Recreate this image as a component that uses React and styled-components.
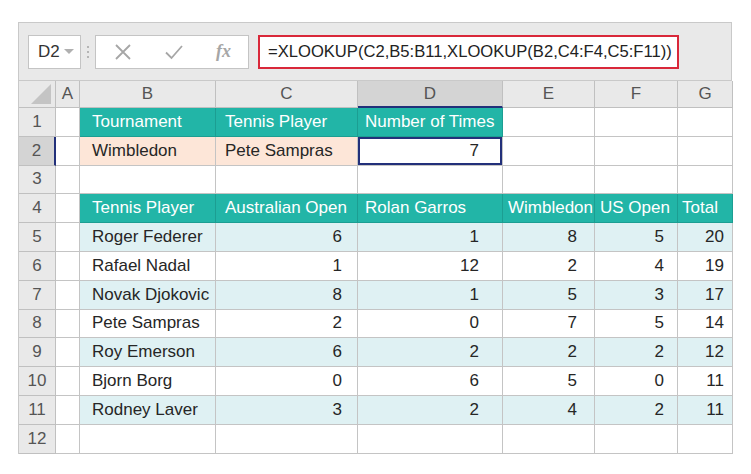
import React from "react";
import styled, { createGlobalStyle } from "styled-components";

const GlobalStyle = createGlobalStyle`
  body {
    margin: 0;
    background: #ffffff;
    font-family: "Liberation Sans", Arial, sans-serif;
  }
`;

const COLS = ["A", "B", "C", "D", "E", "F", "G"];
const WIDTHS = "37px 24px 136px 142px 145px 92px 83px 55px";
// per-column text insets, read off the screenshot
const PAD_LEFT = [0, 12, 9, 7, 5, 5, 4];
const PAD_RIGHT = [0, 10, 15, 23, 17, 13, 8];

const TEAL = "#22b5a7";
const CYAN = "#dff1f3";
const PEACH = "#fde6d8";

const players = [
  ["Roger Federer", 6, 1, 8, 5, 20],
  ["Rafael Nadal", 1, 12, 2, 4, 19],
  ["Novak Djokovic", 8, 1, 5, 3, 17],
  ["Pete Sampras", 2, 0, 7, 5, 14],
  ["Roy Emerson", 6, 2, 2, 2, 12],
  ["Bjorn Borg", 0, 6, 5, 0, 11],
  ["Rodney Laver", 3, 2, 4, 2, 11],
];

function buildRows() {
  const empty = ["", "", "", "", "", "", ""];
  const rows = [];
  rows.push({
    cells: ["", "Tournament", "Tennis Player", "Number of Times", "", "", ""],
    bg: [null, TEAL, TEAL, TEAL, null, null, null],
    head: true,
  });
  rows.push({
    cells: ["", "Wimbledon", "Pete Sampras", "7", "", "", ""],
    bg: [null, PEACH, PEACH, null, null, null, null],
    right: [false, false, false, true],
  });
  rows.push({ cells: empty, bg: [] });
  rows.push({
    cells: ["", "Tennis Player", "Australian Open", "Rolan Garros", "Wimbledon", "US Open", "Total"],
    bg: [null, TEAL, TEAL, TEAL, TEAL, TEAL, TEAL],
    head: true,
  });
  players.forEach((p, i) => {
    const shade = i % 2 === 0 ? CYAN : null;
    rows.push({
      cells: ["", ...p.map(String)],
      bg: [null, shade, shade, shade, shade, shade, shade],
      right: [false, false, true, true, true, true, true],
    });
  });
  rows.push({ cells: empty, bg: [] });
  return rows;
}

function Toolbar() {
  return (
    <Bar>
      <NameBox>
        <span>D2</span>
        <Caret />
      </NameBox>
      <Dots>
        <i />
        <i />
        <i />
      </Dots>
      <ActionBox>
        <svg width="18" height="18" viewBox="0 0 18 18">
          <path d="M2 2 L16 16 M16 2 L2 16" stroke="#a6a6a6" strokeWidth="1.8" fill="none" />
        </svg>
        <svg width="20" height="18" viewBox="0 0 20 18">
          <path d="M2 9.5 L7.5 15 L18 3" stroke="#a6a6a6" strokeWidth="1.8" fill="none" />
        </svg>
        <Fx>fx</Fx>
      </ActionBox>
      <FormulaBox>=XLOOKUP(C2,B5:B11,XLOOKUP(B2,C4:F4,C5:F11))</FormulaBox>
    </Bar>
  );
}

export default function App() {
  const rows = buildRows();
  return (
    <>
      <GlobalStyle />
      <Frame>
        <Toolbar />
        <Sheet>
          <Corner>
            <svg width="22" height="22" viewBox="0 0 22 22">
              <path d="M22 2 L22 22 L2 22 Z" fill="#c4c4c4" />
            </svg>
          </Corner>
          {COLS.map((c) => (
            <ColHead key={c} $active={c === "D"}>
              {c}
            </ColHead>
          ))}
          {rows.map((row, r) => (
            <React.Fragment key={r}>
              <RowHead $active={r === 1}>{r + 1}</RowHead>
              {row.cells.map((text, c) => (
                <Cell
                  key={c}
                  $bg={row.bg[c]}
                  $head={row.head && row.bg[c]}
                  $right={row.right && row.right[c]}
                  $padL={PAD_LEFT[c]}
                  $padR={PAD_RIGHT[c]}
                  $selected={r === 1 && c === 3}
                >
                  {text}
                </Cell>
              ))}
            </React.Fragment>
          ))}
        </Sheet>
      </Frame>
    </>
  );
}

const Frame = styled.div`
  margin: 22px 0 0 18px;
  width: 714px;
  background: #e9e9e9;
  border-top: 1px solid #c9c9c9;
  box-sizing: border-box;
  display: flex;
  flex-direction: column;
`;

const Bar = styled.div`
  height: 57px;
  display: flex;
  align-items: center;
  padding: 0 0 0 9px;
  border-left: 1px solid #c9c9c9;
  border-right: 1px solid #c9c9c9;
  box-sizing: border-box;
`;

const NameBox = styled.div`
  width: 53px;
  height: 34px;
  box-sizing: border-box;
  background: #ffffff;
  border: 1px solid #c4c4c4;
  display: flex;
  align-items: center;
  padding-left: 9px;
  font-size: 17px;
  color: #333333;
`;

const Caret = styled.span`
  margin-left: 4px;
  width: 0;
  height: 0;
  border-left: 5px solid transparent;
  border-right: 5px solid transparent;
  border-top: 5px solid #b0b0b0;
`;

const Dots = styled.div`
  width: 14px;
  display: flex;
  flex-direction: column;
  align-items: center;
  gap: 3px;

  i {
    width: 2px;
    height: 2px;
    background: #b5b5b5;
  }
`;

const ActionBox = styled.div`
  width: 154px;
  height: 34px;
  box-sizing: border-box;
  background: #ffffff;
  border: 1px solid #c4c4c4;
  display: flex;
  align-items: center;
  justify-content: space-between;
  padding: 0 17px 0 18px;
`;

const Fx = styled.span`
  font-family: "Liberation Serif", serif;
  font-style: italic;
  font-weight: bold;
  font-size: 18px;
  color: #a6a6a6;
`;

const FormulaBox = styled.div`
  margin-left: 9px;
  width: 421px;
  height: 34px;
  box-sizing: border-box;
  background: #ffffff;
  border: 2px solid #d9283a;
  display: flex;
  align-items: center;
  padding-left: 8px;
  font-size: 16.6px;
  color: #222222;
  white-space: nowrap;
`;

const Sheet = styled.div`
  display: grid;
  grid-template-columns: ${WIDTHS};
  grid-template-rows: 27px repeat(12, 28.8px);
  border-top: 1px solid #c9c9c9;
  border-left: 1px solid #c9c9c9;
  background: #ffffff;
`;

const Corner = styled.div`
  background: #e9e9e9;
  border-right: 1px solid #c0c0c0;
  border-bottom: 1px solid #c0c0c0;
  display: flex;
  align-items: flex-end;
  justify-content: flex-end;
  padding: 0 4px 3px 0;
`;

const ColHead = styled.div`
  background: ${(p) => (p.$active ? "#d4d4d4" : "#e9e9e9")};
  border-right: 1px solid #c0c0c0;
  border-bottom: ${(p) => (p.$active ? "2px solid #22307a" : "1px solid #c0c0c0")};
  display: flex;
  align-items: center;
  justify-content: center;
  font-size: 17px;
  color: #555555;
`;

const RowHead = styled.div`
  background: ${(p) => (p.$active ? "#d4d4d4" : "#e9e9e9")};
  border-right: ${(p) => (p.$active ? "2px solid #22307a" : "1px solid #c0c0c0")};
  border-bottom: 1px solid #c0c0c0;
  display: flex;
  align-items: center;
  justify-content: center;
  font-size: 17px;
  color: #555555;
`;

const Cell = styled.div`
  position: relative;
  background: ${(p) => p.$bg || "#ffffff"};
  border-right: 1px solid ${(p) => (p.$head ? "#1c9e92" : "#c4c4c4")};
  border-bottom: 1px solid ${(p) => (p.$head ? "#1c9e92" : "#c4c4c4")};
  display: flex;
  align-items: center;
  justify-content: ${(p) => (p.$right ? "flex-end" : "flex-start")};
  padding: ${(p) => (p.$right ? `0 ${p.$padR}px 0 0` : `0 0 0 ${p.$padL}px`)};
  font-size: 17px;
  color: ${(p) => (p.$head ? "#ffffff" : "#262626")};
  white-space: nowrap;
  overflow: hidden;
  box-shadow: ${(p) => (p.$selected ? "inset 0 0 0 2px #22307a" : "none")};
`;
